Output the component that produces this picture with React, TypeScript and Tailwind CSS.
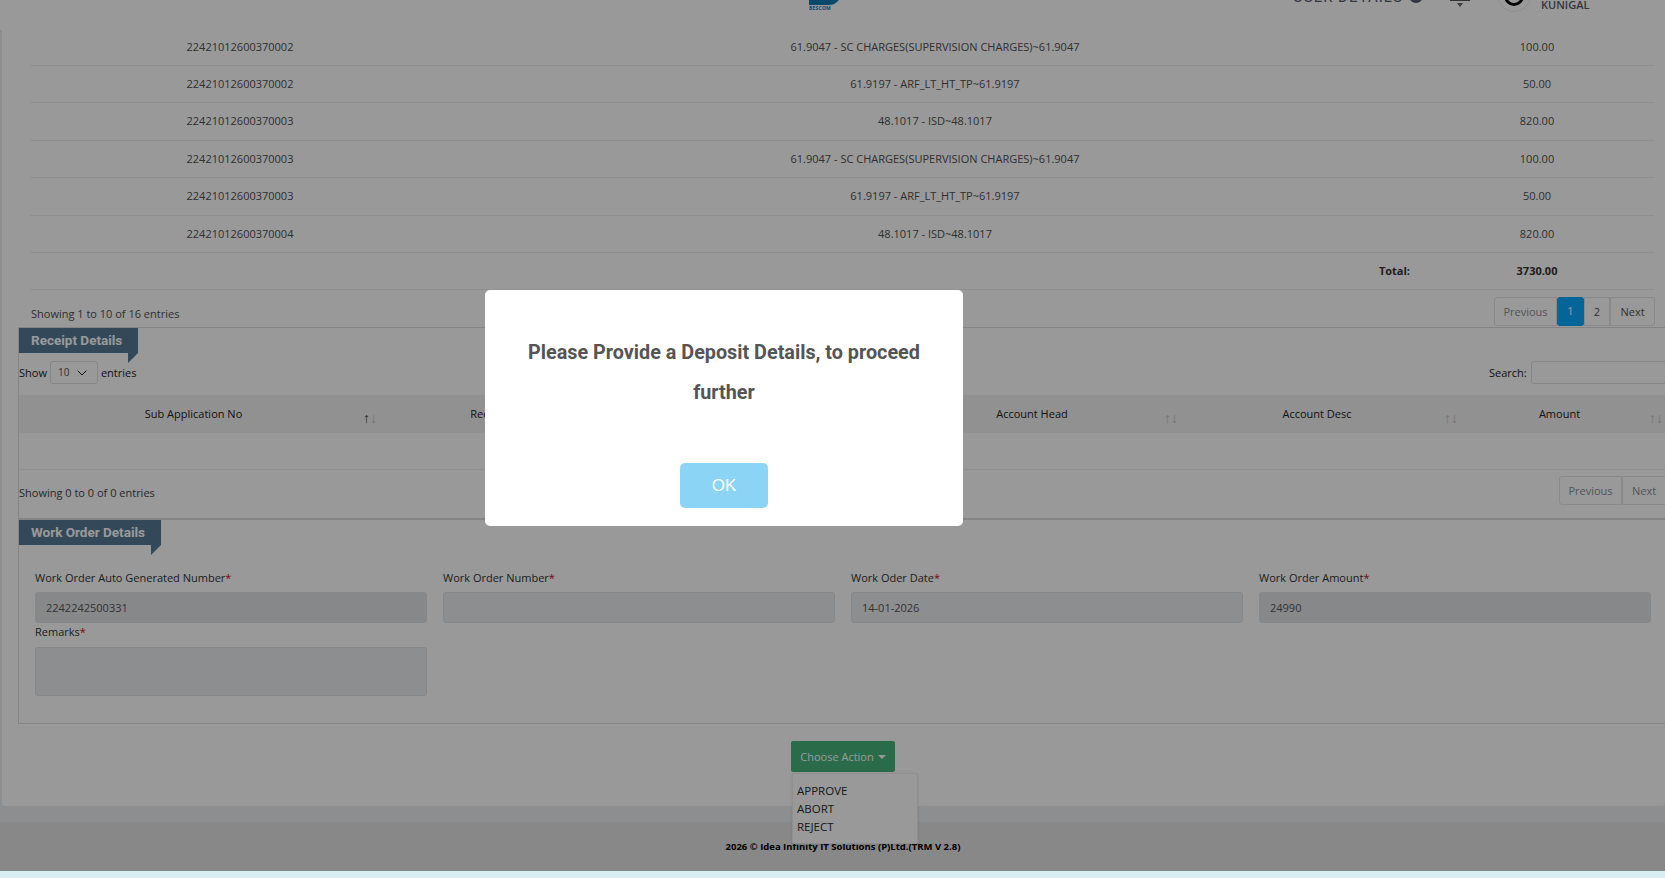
import { ChevronDown } from "lucide-react";

const rows = [
  ["22421012600370002", "61.9047 - SC CHARGES(SUPERVISION CHARGES)~61.9047", "100.00"],
  ["22421012600370002", "61.9197 - ARF_LT_HT_TP~61.9197", "50.00"],
  ["22421012600370003", "48.1017 - ISD~48.1017", "820.00"],
  ["22421012600370003", "61.9047 - SC CHARGES(SUPERVISION CHARGES)~61.9047", "100.00"],
  ["22421012600370003", "61.9197 - ARF_LT_HT_TP~61.9197", "50.00"],
  ["22421012600370004", "48.1017 - ISD~48.1017", "820.00"],
];

const receiptHeads = ["Sub Application No", "Receipt No", "Receipt Date", "Account Head", "Account Desc", "Amount"];

const SectionTab = ({ title }: { title: string }) => (
  <div className="relative w-fit h-[25px] pl-3 pr-4 bg-[#557a96] text-white text-[13.5px] font-bold leading-[25px] font-['Roboto',sans-serif]">
    {title}
    <div className="absolute top-full right-0 w-0 h-0 border-t-[10px] border-r-[10px] border-t-[#557a96] border-r-transparent" />
  </div>
);

const SortArrows = ({ active }: { active?: boolean }) => (
  <span className="absolute right-[7px] top-[15px] flex text-[14px] leading-[16px] font-normal font-['Liberation_Sans',sans-serif]">
    <span className={active ? "text-[#444]" : "text-[#c4c4c4]"}>↑</span>
    <span className="text-[#c4c4c4]">↓</span>
  </span>
);

const Field = ({ label, value, disabled }: { label: string; value?: string; disabled?: boolean }) => (
  <div>
    <div className="h-[25px] text-[11px] leading-[20px] font-medium text-[#333] pt-[1px]">
      {label}
      <span className="text-[#d9001b]">*</span>
    </div>
    <div
      className={`h-[31px] rounded-[3px] border px-2.5 text-[11px] leading-[29px] text-[#555] ${
        disabled ? "bg-[#e1e3e6] border-[#e1e3e6]" : "bg-[#ebedf0] border-[#dfe1e4]"
      }`}
    >
      {value}
    </div>
  </div>
);

const App = () => {
  return (
    <div className="h-[878px] w-full overflow-hidden bg-[#d8eef2] font-['Open_Sans',sans-serif]">
      <div className="relative h-[871px] overflow-hidden bg-[#ebedf0]">
        {/* header, page is scrolled so its top is cut off */}
        <header className="h-[30px] bg-white flex items-end overflow-hidden shadow-[0_1px_3px_rgba(0,0,0,0.08)]">
          <div className="ml-[809px] w-[34px] shrink-0 flex flex-col mb-[18px]">
            <div className="w-[32px] h-[16px] bg-[#1279b5] rounded-br-[12px]" />
            <span className="text-[5px] leading-[7px] font-bold tracking-[0.2px] text-[#1279b5]">BESCOM</span>
          </div>
          <div className="ml-[450px] mb-[23px] flex items-center shrink-0">
            <span className="w-[109px] shrink-0 whitespace-nowrap text-[15px] leading-[20px] tracking-[1px] text-[#555b6b] font-['Roboto',sans-serif]">
              USER DETAILS
            </span>
            <span className="ml-[7px] w-[14px] h-[14px] rounded-full bg-[#555b6b] -translate-y-[1px]" />
          </div>
          <div className="ml-[27px] mb-[23px] w-[20px] shrink-0 flex flex-col items-center">
            <div className="w-[20px] h-[2px] bg-[#555]" />
            <div className="mt-[2px] w-0 h-0 border-t-[4px] border-x-[3px] border-t-[#666] border-x-transparent" />
          </div>
          <div className="ml-[27px] mb-[18px] w-[34px] h-[34px] shrink-0 rounded-full border border-[#eee] flex items-center justify-center">
            <div className="w-[20px] h-[20px] rounded-full border-[3px] border-black translate-y-[1px]" />
          </div>
          <div className="ml-[10px] mb-[18px] text-[11px] leading-[14px] font-semibold text-[#555b6b]">KUNIGAL</div>
        </header>

        <main className="h-[776px] ml-[2px] bg-white rounded-b-[3px] overflow-hidden text-[#505050]">
          {/* fee table */}
          <div className="ml-[28px] w-[1624px] text-[11px]">
            {rows.map((row, i) => (
              <div
                key={i}
                className={`grid grid-cols-[420px_970px_234px] items-center text-center border-b border-[#eeeeee] ${
                  i === 0 ? "h-[36px]" : "h-[37.4px]"
                }`}
              >
                <span>{row[0]}</span>
                <span>{row[1]}</span>
                <span>{row[2]}</span>
              </div>
            ))}
            <div className="grid grid-cols-[420px_970px_234px] items-center h-[37.4px] text-center border-b border-[#eeeeee] font-bold text-[#333]">
              <span />
              <span className="text-right pr-2.5">Total:</span>
              <span>3730.00</span>
            </div>
          </div>
          <div className="ml-[29px] w-[1624px] h-[37px] flex items-center justify-between text-[11px]">
            <span className="pt-[10px]">Showing 1 to 10 of 16 entries</span>
            <div className="flex h-[29px] mt-[6px] leading-[27px] text-center">
              <span className="w-[63px] border border-[#e4e4e4] rounded-l-[3px] text-[#8a8f96]">Previous</span>
              <span className="w-[27px] bg-[#08a8ff] text-white rounded-[3px]">1</span>
              <span className="w-[26px] border border-[#e4e4e4]">2</span>
              <span className="w-[45px] border border-[#e4e4e4] rounded-r-[3px]">Next</span>
            </div>
          </div>

          {/* receipt + work order box */}
          <div className="-ml-[2px] pl-[18px]">
            <div className="w-[1720px] h-[397px] border-l border-y border-[#dddddd]">
              <SectionTab title="Receipt Details" />
              <div className="w-[1651px] h-[23px] mt-[8px] flex items-center justify-between text-[11px] font-medium text-[#222]">
                <div className="flex items-center">
                  <span>Show</span>
                  <span className="ml-[3px] w-[48px] h-[23px] px-[7px] flex items-center justify-between rounded-[3px] border border-[#dfdfdf] text-[10px] font-normal text-[#555]">
                    10
                    <ChevronDown size={16} strokeWidth={1.5} className="text-[#222]" />
                  </span>
                  <span className="ml-[3px]">entries</span>
                </div>
                <div className="flex items-center w-[181px] shrink-0">
                  <span className="w-[42px] shrink-0">Search:</span>
                  <span className="h-[23px] w-[200px] shrink-0 rounded-[3px] border border-[#dfdfdf]" />
                </div>
              </div>

              <div className="grid grid-cols-[365px_244px_267px_290px_280px_205px] h-[38px] mt-[11px] bg-[#f2f2f2] text-[11px] font-medium text-[#222]">
                {receiptHeads.map((head, i) => (
                  <div key={head} className="relative pr-4 text-center leading-[38px]">
                    {head}
                    <SortArrows active={i === 0} />
                  </div>
                ))}
              </div>
              <div className="h-[37px] border-b border-[#eeeeee]" />
              <div className="w-[1651px] h-[48px] flex items-start justify-between text-[11px]">
                <span className="pt-[15px] text-[#444]">Showing 0 to 0 of 0 entries</span>
                <div className="flex h-[29px] mt-[6px] leading-[27px] text-center text-[#8a8f96] w-[111px] shrink-0">
                  <span className="w-[63px] shrink-0 border border-[#e4e4e4] rounded-l-[3px]">Previous</span>
                  <span className="w-[49px] shrink-0 pl-[9px] text-left border border-[#e4e4e4] rounded-r-[3px]">Next</span>
                </div>
              </div>

              <div className="border-t-2 border-[#dddddd]">
                <SectionTab title="Work Order Details" />
                <div className="ml-[16px] mt-[22px] grid grid-cols-[repeat(4,392px)] gap-x-4">
                  <Field label="Work Order Auto Generated Number" value="2242242500331" disabled />
                  <Field label="Work Order Number" />
                  <Field label="Work Oder Date" value="14-01-2026" />
                  <Field label="Work Order Amount" value="24990" disabled />
                  <div className="-mt-[1px]">
                    <div className="h-[25px] text-[11px] leading-[20px] font-medium text-[#333]">
                      Remarks<span className="text-[#d9001b]">*</span>
                    </div>
                    <div className="h-[49px] rounded-[3px] border border-[#dfe1e4] bg-[#ebedf0]" />
                  </div>
                </div>
              </div>
            </div>
          </div>

          {/* action button with its open menu */}
          <div className="relative ml-[789px] mt-[17px] w-fit">
            <div className="h-[31px] w-[104px] rounded-[2px] bg-[#46b37a] text-white text-[11px] flex items-center justify-center gap-1">
              Choose Action
              <span className="w-0 h-0 border-t-[4px] border-x-[4px] border-t-white border-x-transparent" />
            </div>
          </div>
        </main>

        <footer className="mt-[16px] h-[49px] bg-[#e3e3e3] text-center text-[9.5px] font-bold text-black pt-[18px] pl-[21px] leading-[14px]">
          2026 © Idea Infinity IT Solutions (P)Ltd.(TRM V 2.8)
        </footer>

        <div className="absolute left-[792px] top-[773px] w-[126px] h-[71px] pt-[8px] pl-[4px] bg-white rounded-[2px] border border-[#eeeeee] shadow-sm text-[11.5px] leading-[18px] text-[#2a2a2a]">
          <div>APPROVE</div>
          <div>ABORT</div>
          <div>REJECT</div>
        </div>

        {/* modal */}
        <div className="absolute inset-0 bg-black/40" />
        <div className="absolute left-[485px] top-[290px] w-[478px] h-[236px] bg-white rounded-[5px] flex flex-col items-center pt-[43px]">
          <div className="w-[420px] text-center text-[19.8px] leading-[40px] font-bold text-[#555] font-['Roboto',sans-serif]">
            Please Provide a Deposit Details, to proceed further
          </div>
          <button className="mt-[50px] w-[88px] h-[45px] rounded-[5px] bg-[#8cd4f6] text-white text-[17px] font-['Liberation_Sans',sans-serif]">
            OK
          </button>
        </div>
      </div>
    </div>
  );
};

export default App;
